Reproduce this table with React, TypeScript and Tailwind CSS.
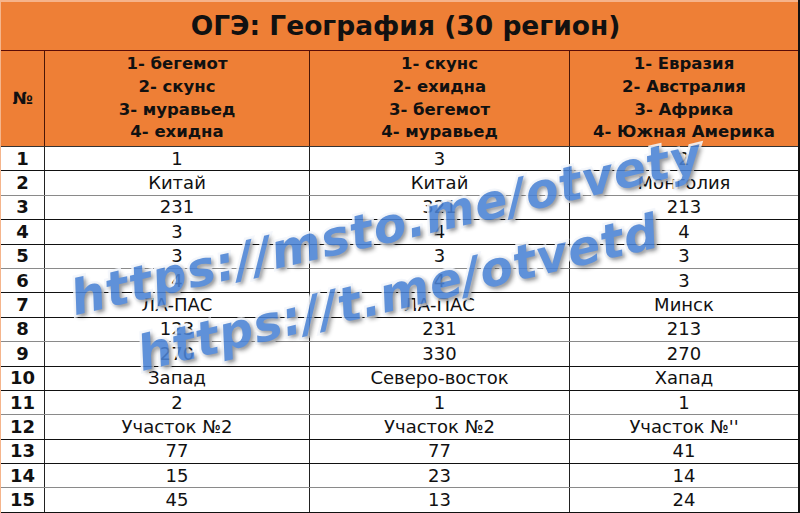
import React from "react";

const rows: [string, string, string, string][] = [
  ["1", "1", "3", "2"],
  ["2", "Китай", "Китай", "Монголия"],
  ["3", "231", "321", "213"],
  ["4", "3", "4", "4"],
  ["5", "3", "3", "3"],
  ["6", "4", "4", "3"],
  ["7", "ЛА-ПАС", "ЛА-ПАС", "Минск"],
  ["8", "123", "231", "213"],
  ["9", "270", "330", "270"],
  ["10", "Запад", "Северо-восток", "Хапад"],
  ["11", "2", "1", "1"],
  ["12", "Участок №2", "Участок №2", "Участок №''"],
  ["13", "77", "77", "41"],
  ["14", "15", "23", "14"],
  ["15", "45", "13", "24"],
];

const heads = [
  ["1- бегемот", "2- скунс", "3- муравьед", "4- ехидна"],
  ["1- скунс", "2- ехидна", "3- бегемот", "4- муравьед"],
  ["1- Евразия", "2- Австралия", "3- Африка", "4- Южная Америка"],
];

const wm =
  "absolute whitespace-nowrap font-bold italic text-[48px] leading-none text-[#4a82d4] tracking-[1px] [paint-order:stroke_fill] [-webkit-text-stroke:5px_#f4f7fc] [text-shadow:2px_3px_4px_rgba(0,0,0,0.45)] opacity-[0.88]";

export default function App() {
  return (
    <div
      className="relative w-[800px] h-[513px] overflow-hidden bg-white text-[#111]"
      style={{ fontFamily: '"DejaVu Sans", sans-serif' }}
    >
      <div className="flex flex-col h-full border-r-2 border-r-[#111] border-l border-l-[#f5b58c]">
        <div className="h-[51px] shrink-0 bg-[#ee7f36] border-t-2 border-t-[#f6b38a] border-b border-b-[#5a0c06] flex items-center justify-center font-bold text-[26.5px] text-[#111] pl-[12px]">
          ОГЭ: География (30 регион)
        </div>
        <div className="h-[96px] shrink-0 bg-[#ee7f36] grid grid-cols-[44px_265px_260px_1fr] border-b border-b-[#333]">
          <div className="flex items-center justify-center font-bold text-[17px] border-r border-r-[#4a1606]">
            №
          </div>
          {heads.map((h, i) => (
            <div
              key={i}
              className={
                "flex flex-col items-center justify-center font-bold text-[16.5px] leading-[22.6px] " +
                (i < 2 ? "border-r border-r-[#4a1606]" : "")
              }
            >
              {h.map((t) => (
                <div key={t}>{t}</div>
              ))}
            </div>
          ))}
        </div>
        <div className="flex-1 flex flex-col">
          {rows.map((r, i) => (
            <div
              key={i}
              className={
                "grid grid-cols-[44px_265px_260px_1fr] h-[24.4px] text-[18px] leading-none " +
                (i % 3 === 1 ? "border-b border-b-[#8a8a8a]" : "border-b border-b-[#111]")
              }
            >
              <div className="flex items-center justify-center font-bold border-r border-r-[#222]">
                {r[0]}
              </div>
              <div className="flex items-center justify-center border-r border-r-[#222]">{r[1]}</div>
              <div className="flex items-center justify-center border-r border-r-[#222]">{r[2]}</div>
              <div className="flex items-center justify-center">{r[3]}</div>
            </div>
          ))}
        </div>
      </div>
      <div
        className={wm + " left-[386px] top-[226px] -translate-x-1/2 -translate-y-1/2 -rotate-[13deg]"}
      >
        https://msto.me/otvety
      </div>
      <div
        className={wm + " left-[398px] top-[292px] -translate-x-1/2 -translate-y-1/2 -rotate-[13.5deg]"}
      >
        https://t.me/otvetd
      </div>
    </div>
  );
}
